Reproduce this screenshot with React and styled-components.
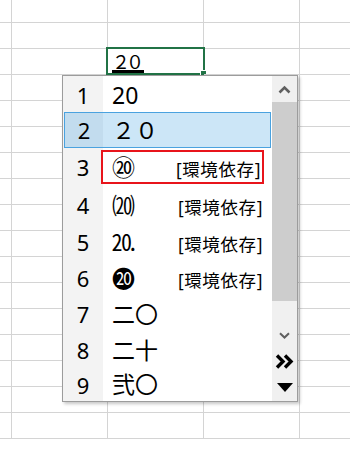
import React from 'react';
import styled, { createGlobalStyle } from 'styled-components';

const GRID = '#d4d4d4';
const FONT = '"Noto Sans", "Noto Sans CJK JP", "DejaVu Sans", sans-serif';

const GlobalStyle = createGlobalStyle`
  body {
    margin: 0;
    background: #fff;
    font-family: ${FONT};
    color: #000;
  }
`;

const Sheet = styled.div`
  position: relative;
  width: 350px;
  height: 454px;
  overflow: hidden;
  display: grid;
  grid-template-columns: 12px repeat(3, 96px) 1fr;
  grid-template-rows: 23px;
  grid-auto-rows: 26px;
`;

const Cell = styled.div`
  position: relative;
  box-sizing: border-box;
  border-right: ${p => (p.$last ? 'none' : `1px solid ${GRID}`)};
  border-bottom: 1px solid ${GRID};
  display: flex;
  align-items: flex-end;
  padding-left: 4px;
`;

const ActiveFrame = styled.div`
  position: absolute;
  top: -2px;
  left: -2px;
  right: -2px;
  bottom: -1px;
  border: 2px solid #217346;
`;

const FillHandle = styled.div`
  position: absolute;
  right: -4px;
  bottom: -3px;
  width: 5px;
  height: 5px;
  background: #217346;
  border: 1px solid #fff;
`;

const Composing = styled.span`
  font-family: "Noto Sans CJK JP", monospace;
  font-size: 18px;
  line-height: 17px;
  letter-spacing: -4px;
  padding-right: 4px;
  border-bottom: 3px solid #000;
  margin-bottom: 1px;
`;

const Popup = styled.div`
  position: absolute;
  left: 62px;
  top: 75px;
  width: 236px;
  height: 327px;
  box-sizing: border-box;
  border: 1px solid #9c9c9c;
  background: #fff;
  box-shadow: 2px 2px 3px rgba(0, 0, 0, 0.22);
  display: flex;
  z-index: 2;
`;

const List = styled.div`
  width: 209px;
  box-sizing: border-box;
  padding-top: 2px;
  display: flex;
  flex-direction: column;
  background: linear-gradient(to right, #f3f3f3 40px, #fff 40px);
`;

const Row = styled.div`
  display: flex;
  box-sizing: border-box;
  height: ${p => p.$h}px;
  margin: ${p => (p.$selected ? '0 1px' : '0')};
  border: ${p => (p.$selected ? '1px solid #4aa2df' : 'none')};
  background: ${p => (p.$selected ? '#cce6f7' : 'transparent')};
`;

const NumCell = styled.div`
  width: ${p => (p.$selected ? 38 : 40)}px;
  flex-shrink: 0;
  display: flex;
  align-items: center;
  justify-content: center;
  font-size: 22px;
  background: ${p => (p.$selected ? '#c2dcee' : '#f3f3f3')};
`;

const Content = styled.div`
  flex: 1;
  display: flex;
  align-items: center;
  justify-content: space-between;
  box-sizing: border-box;
  margin: ${p => (p.$boxed ? '2px 8px 2px -2px' : '0')};
  padding: ${p => (p.$boxed ? '0 1px 0 9px' : '0 9px')};
  border: ${p => (p.$boxed ? '2px solid #e8141b' : 'none')};
`;

const Candidate = styled.span`
  font-size: 23px;
  line-height: 1;
  white-space: pre;
`;

const Note = styled.span`
  font-size: 17.5px;
  line-height: 1;
  letter-spacing: 0.6px;
  padding-top: 6px;
`;

const ScrollBar = styled.div`
  width: 25px;
  display: flex;
  flex-direction: column;
  background: #f0f0f0;
`;

const ScrollButton = styled.div`
  height: ${p => p.$h || 26}px;
  flex-shrink: 0;
  display: flex;
  align-items: center;
  justify-content: center;
`;

const Track = styled.div`
  flex: 1;
  display: flex;
  flex-direction: column;
`;

const Thumb = styled.div`
  height: 199px;
  background: #cdcdcd;
`;

const rows = [
  { n: 1, text: '20', h: 34 },
  { n: 2, text: '２０', h: 36, selected: true },
  { n: 3, text: '⑳', h: 38, note: true, boxed: true },
  { n: 4, text: '⒇', h: 38, note: true },
  { n: 5, text: '⒛', h: 36, note: true },
  { n: 6, text: '⓴', h: 36, note: true },
  { n: 7, text: '二〇', h: 36 },
  { n: 8, text: '二十', h: 36 },
  { n: 9, text: '弐〇', h: 33 },
];

const ROWS = 17;
const COLS = 5;

export default function App() {
  const cells = [];
  for (let r = 0; r < ROWS; r++) {
    for (let c = 0; c < COLS; c++) {
      const active = r === 2 && c === 2;
      cells.push(
        <Cell key={`${r}-${c}`} $last={c === COLS - 1}>
          {active && (
            <>
              <Composing>２０</Composing>
              <ActiveFrame />
              <FillHandle />
            </>
          )}
        </Cell>
      );
    }
  }

  return (
    <>
      <GlobalStyle />
      <Sheet>
        {cells}
        <Popup>
          <List>
            {rows.map(row => (
              <Row key={row.n} $h={row.h} $selected={row.selected}>
                <NumCell $selected={row.selected}>{row.n}</NumCell>
                <Content $boxed={row.boxed}>
                  <Candidate>{row.text}</Candidate>
                  {row.note && <Note>[環境依存]</Note>}
                </Content>
              </Row>
            ))}
          </List>
          <ScrollBar>
            <ScrollButton>
              <svg width="13" height="9" viewBox="0 0 13 9">
                <polyline points="1.5,7.5 6.5,2.5 11.5,7.5" fill="none" stroke="#606060" strokeWidth="2.6" />
              </svg>
            </ScrollButton>
            <Track>
              <Thumb />
            </Track>
            <ScrollButton>
              <svg width="11" height="7" viewBox="0 0 11 7">
                <polyline points="1,1.2 5.5,5.5 10,1.2" fill="none" stroke="#606060" strokeWidth="2" />
              </svg>
            </ScrollButton>
            <ScrollButton>
              <svg width="19" height="15" viewBox="0 0 19 15">
                <polyline points="2,1.5 8,7.5 2,13.5" fill="none" stroke="#000" strokeWidth="3.4" />
                <polyline points="10,1.5 16,7.5 10,13.5" fill="none" stroke="#000" strokeWidth="3.4" />
              </svg>
            </ScrollButton>
            <ScrollButton $h={27}>
              <svg width="16" height="9" viewBox="0 0 16 9">
                <polygon points="0,0 16,0 8,9" fill="#000" />
              </svg>
            </ScrollButton>
          </ScrollBar>
        </Popup>
      </Sheet>
    </>
  );
}
